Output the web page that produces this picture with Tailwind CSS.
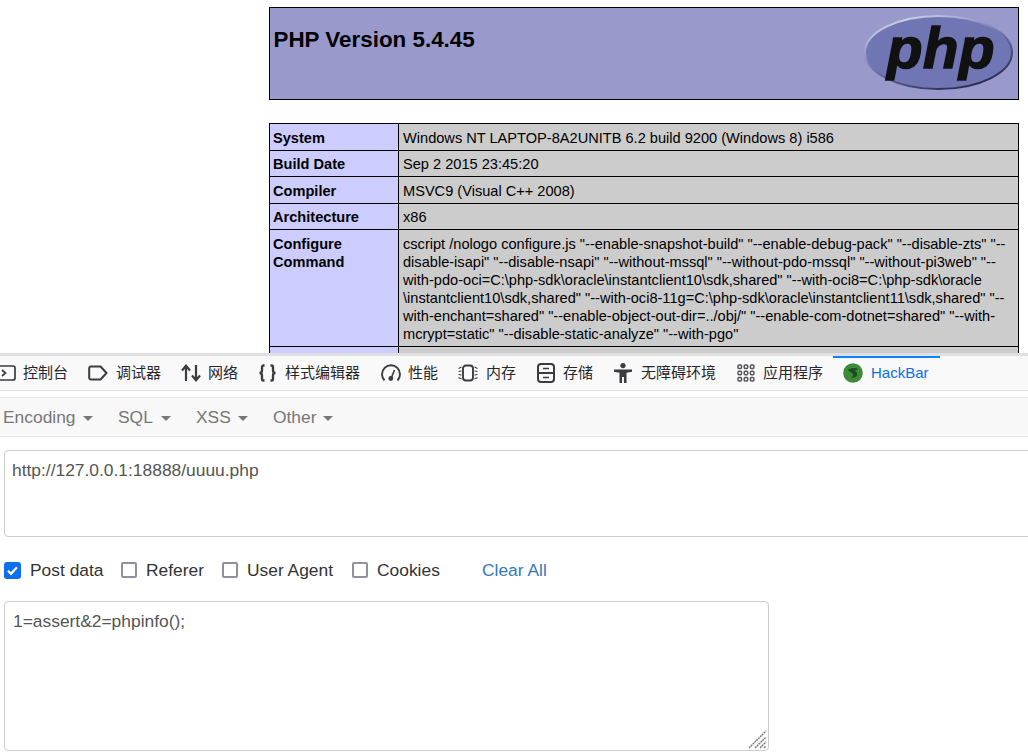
<!DOCTYPE html>
<html lang="zh">
<head>
<meta charset="UTF-8">
<title>phpinfo - HackBar</title>
<script src="https://cdn.jsdelivr.net/npm/@tailwindcss/browser@4"></script>
</head>
<body class="bg-white w-[1028px] h-[752px] overflow-hidden font-['Liberation_Sans','Noto_Sans_CJK_SC',sans-serif]">
  <!-- phpinfo page -->
  <div class="h-[353px] overflow-hidden pt-[7px] pl-[269px] pr-[9px] text-black">
    <div class="h-[93px] border border-black bg-[#9999cc] flex justify-between pl-[3.500px] pr-[5px]">
      <h1 class="text-[22.4px] leading-[27px] font-bold pt-[18px]">PHP Version 5.4.45</h1>
      <svg class="mt-[7px]" width="150" height="78" viewBox="0 0 150 78">
        <defs>
          <linearGradient id="rim" x1="0.2" y1="0" x2="0.8" y2="1">
            <stop offset="0" stop-color="#d5d7ec"/>
            <stop offset="0.5" stop-color="#6c71ad"/>
            <stop offset="1" stop-color="#1f2340"/>
          </linearGradient>
        </defs>
        <ellipse cx="75.500" cy="37.500" rx="73.500" ry="36.500" fill="#6f76b3" stroke="url(#rim)" stroke-width="2"/>
        <text x="78" y="53" text-anchor="middle" font-family="Liberation Sans" font-size="58" font-weight="700" font-style="italic" letter-spacing="0.500" fill="#111" stroke="#111" stroke-width="1.600">php</text>
      </svg>
    </div>
    <table class="mt-[23px] w-[750px] border-collapse table-fixed text-[14.6px] leading-[18px]">
      <tbody>
        <tr class="h-[27px]">
          <td class="w-[129px] border border-black bg-[#ccccff] font-bold pl-[3px] pr-1 pt-px align-middle">System</td>
          <td class="border border-black bg-[#cccccc] px-1 pt-px align-middle">Windows NT LAPTOP-8A2UNITB 6.2 build 9200 (Windows 8) i586</td>
        </tr>
        <tr class="h-[26px]">
          <td class="border border-black bg-[#ccccff] font-bold pl-[3px] pr-1 align-middle">Build Date</td>
          <td class="border border-black bg-[#cccccc] px-1 align-middle">Sep 2 2015 23:45:20</td>
        </tr>
        <tr class="h-[27px]">
          <td class="border border-black bg-[#ccccff] font-bold pl-[3px] pr-1 pt-px align-middle">Compiler</td>
          <td class="border border-black bg-[#cccccc] px-1 pt-px align-middle">MSVC9 (Visual C++ 2008)</td>
        </tr>
        <tr class="h-[26px]">
          <td class="border border-black bg-[#ccccff] font-bold pl-[3px] pr-1 align-middle">Architecture</td>
          <td class="border border-black bg-[#cccccc] px-1 align-middle">x86</td>
        </tr>
        <tr class="h-[117px]">
          <td class="border border-black bg-[#ccccff] font-bold pl-[3px] pr-1 align-top pt-[5px]">Configure<br>Command</td>
          <td class="border border-black bg-[#cccccc] px-1 align-top pt-[5px] whitespace-nowrap">cscript /nologo configure.js "--enable-snapshot-build" "--enable-debug-pack" "--disable-zts" "--<br>disable-isapi" "--disable-nsapi" "--without-mssql" "--without-pdo-mssql" "--without-pi3web" "--<br>with-pdo-oci=C:\php-sdk\oracle\instantclient10\sdk,shared" "--with-oci8=C:\php-sdk\oracle<br>\instantclient10\sdk,shared" "--with-oci8-11g=C:\php-sdk\oracle\instantclient11\sdk,shared" "--<br>with-enchant=shared" "--enable-object-out-dir=../obj/" "--enable-com-dotnet=shared" "--with-<br>mcrypt=static" "--disable-static-analyze" "--with-pgo"</td>
        </tr>
        <tr class="h-[20px]">
          <td class="border border-black bg-[#ccccff]"></td>
          <td class="border border-black bg-[#cccccc]"></td>
        </tr>
      </tbody>
    </table>
  </div>

  <!-- devtools tabs -->
  <div class="h-[38px] border-t-[3px] border-[#e0e0e2] border-b-[1px] border-b-[#e0e0e2] bg-[#f9f9fa] flex items-center text-[15px] text-[#26262b]">
    <div class="flex items-center gap-[7px] w-[88px] shrink-0">
      <svg width="16" height="16" viewBox="0 0 16 16" fill="none" stroke="#3b3b40" stroke-width="1.700"><path d="M0 1h13a2 2 0 0 1 2 2v10a2 2 0 0 1-2 2H0"/><path d="M2 5l3.500 3L2 11"/></svg>
      <span>控制台</span>
    </div>
    <div class="flex items-center gap-[8px] w-[93px] shrink-0">
      <svg width="20" height="16" viewBox="0 0 20 16" fill="none" stroke="#3b3b40" stroke-width="2"><path d="M3 1.500h9.500L18.500 8l-6 6.500H3A1.800 1.800 0 0 1 1.200 12.700V3.300A1.800 1.800 0 0 1 3 1.500z" stroke-linejoin="round"/></svg>
      <span>调试器</span>
    </div>
    <div class="flex items-center gap-[7px] w-[77px] shrink-0">
      <svg width="20" height="18" viewBox="0 0 20 18" fill="none" stroke="#3b3b40" stroke-width="2.200"><path d="M5 17V2M1 6.500L5 1.800l4 4.700"/><path d="M15 1v15M11 11.500l4 4.700 4-4.700"/></svg>
      <span>网络</span>
    </div>
    <div class="flex items-center gap-[8px] w-[123px] shrink-0">
      <svg width="19" height="18" viewBox="0 0 19 18" fill="none" stroke="#3b3b40" stroke-width="2.300"><path d="M6.500 1.500H5.500A1.500 1.500 0 0 0 4 3v3.500C4 8 3 9 1.500 9 3 9 4 10 4 11.500V15a1.500 1.500 0 0 0 1.500 1.500h1"/><path d="M12.500 1.500h1A1.500 1.500 0 0 1 15 3v3.500C15 8 16 9 17.500 9 16 9 15 10 15 11.500V15a1.500 1.500 0 0 1-1.500 1.500h-1"/></svg>
      <span>样式编辑器</span>
    </div>
    <div class="flex items-center gap-[7px] w-[77px] shrink-0">
      <svg width="20" height="18" viewBox="0 0 20 18" fill="none" stroke="#3b3b40" stroke-width="1.900"><path d="M3.500 16.500A9 9 0 1 1 16.500 16.500"/><path d="M13.500 6l-3 7.500" stroke-width="1.600"/><circle cx="9.800" cy="14.500" r="2.400" fill="#3b3b40" stroke="none"/></svg>
      <span>性能</span>
    </div>
    <div class="flex items-center gap-[8px] w-[79px] shrink-0">
      <svg width="20" height="18" viewBox="0 0 20 18" fill="none" stroke="#3b3b40" stroke-width="1.900"><rect x="5" y="1.500" width="10" height="15" rx="3"/><path d="M0.500 4.500l3-1.500M0.500 7.500l3-.5M0.500 10.500l3 .5M0.500 13.500l3 1.500M19.500 4.500l-3-1.500M19.500 7.500l-3-.5M19.500 10.500l-3 .5M19.500 13.500l-3 1.500" stroke-width="1.100"/></svg>
      <span>内存</span>
    </div>
    <div class="flex items-center gap-[8px] w-[77px] shrink-0">
      <svg width="18" height="20" viewBox="0 0 18 20" fill="none" stroke="#3b3b40" stroke-width="2"><rect x="1" y="1" width="16" height="18" rx="3"/><path d="M1 10h16"/><path d="M6 5.500h6M6 14.500h6" stroke-width="1.500"/></svg>
      <span>存储</span>
    </div>
    <div class="flex items-center gap-[9px] w-[123px] shrink-0">
      <svg width="18" height="20" viewBox="0 0 18 20" fill="#3b3b40"><circle cx="9" cy="2.600" r="2.600"/><path d="M0 6.500h18v2.300l-5.500 1V20h-2.500v-6H8v6H5.500V9.800L0 8.800z"/></svg>
      <span>无障碍环境</span>
    </div>
    <div class="flex items-center gap-[8px] w-[96px] shrink-0">
      <svg width="18" height="18" viewBox="0 0 18 18" fill="none" stroke="#55555a" stroke-width="1.500"><rect x="1" y="1" width="3.500" height="3.500" rx="1"/><rect x="7.200" y="1" width="3.500" height="3.500" rx="1"/><rect x="13.400" y="1" width="3.500" height="3.500" rx="1"/><rect x="1" y="7.200" width="3.500" height="3.500" rx="1"/><rect x="7.200" y="7.200" width="3.500" height="3.500" rx="1"/><rect x="13.400" y="7.200" width="3.500" height="3.500" rx="1"/><rect x="1" y="13.400" width="3.500" height="3.500" rx="1"/><rect x="7.200" y="13.400" width="3.500" height="3.500" rx="1"/><rect x="13.400" y="13.400" width="3.500" height="3.500" rx="1"/></svg>
      <span>应用程序</span>
    </div>
    <div class="flex items-center gap-[8px] h-[35px] w-[107px] shrink-0 pl-[10px] pb-[2px] border-t-2 border-[#0a84ff] text-[#0b6fe0]">
      <svg width="20" height="20" viewBox="0 0 20 20"><circle cx="10" cy="10" r="9.800" fill="#3f8a38"/><path d="M5 7c3-2.500 8-2.500 10-.5-1 .5-2.500 .5-3.500 1 1.500 1 3 2.500 2.500 5-1.500 2-4 2.500-6 2 1.500-1 2.500-2 2-3.500-1.500-1.500-3.500-2-5-4z" fill="#1c4d20"/></svg>
      <span>HackBar</span>
    </div>
  </div>

  <!-- hackbar menu -->
  <div class="mt-[6px] h-[40px] bg-[#f8f8f8] border-y border-[#e7e7e7] flex items-center text-[17.4px] text-[#777777] pl-[3px]">
    <span class="w-[73px]">Encoding</span><span class="ml-[7px] mr-[25px] mt-[2px] border-x-[5px] border-x-transparent border-t-[5px] border-t-[#777777]"></span>
    <span class="w-[35px]">SQL</span><span class="ml-[8px] mr-[25px] mt-[2px] border-x-[5px] border-x-transparent border-t-[5px] border-t-[#777777]"></span>
    <span class="w-[34px]">XSS</span><span class="ml-[8px] mr-[25px] mt-[2px] border-x-[5px] border-x-transparent border-t-[5px] border-t-[#777777]"></span>
    <span class="w-[44px]">Other</span><span class="ml-[6px] mt-[2px] border-x-[5px] border-x-transparent border-t-[5px] border-t-[#777777]"></span>
  </div>

  <!-- hackbar form -->
  <div class="pl-1 text-[17.4px] text-[#555555]">
    <div class="mt-[13px] h-[87px] w-[1040px] rounded-[4px] border border-[#cccccc] bg-white pl-[7px] pr-2 pt-[7px] leading-[25px]">http://127.0.0.1:18888/uuuu.php</div>
    <div class="mt-[21px] h-[24px] flex items-center text-[#333333]">
      <span class="w-[17px] h-[17px] rounded-[3px] bg-[#0b6ff0] flex items-center justify-center">
        <svg width="13" height="13" viewBox="0 0 13 13" fill="none" stroke="#fff" stroke-width="2.200"><path d="M2 6.800l3 3 6-6.500"/></svg>
      </span>
      <span class="ml-[9px] w-[91px]">Post data</span>
      <span class="w-[16px] h-[16px] rounded-[2px] border-2 border-[#8f8f9d] bg-white"></span>
      <span class="ml-[9px] w-[76px]">Referer</span>
      <span class="w-[16px] h-[16px] rounded-[2px] border-2 border-[#8f8f9d] bg-white"></span>
      <span class="ml-[9px] w-[105px]">User Agent</span>
      <span class="w-[16px] h-[16px] rounded-[2px] border-2 border-[#8f8f9d] bg-white"></span>
      <span class="ml-[9px] w-[105px]">Cookies</span>
      <span class="text-[#337ab7]">Clear All</span>
    </div>
    <div class="relative mt-[19px] h-[150px] w-[765px] rounded-[4px] border border-[#cccccc] bg-white px-2 pt-[7px] leading-[25px]">1=assert&amp;2=phpinfo();
      <svg class="absolute right-0 bottom-0" width="20" height="20" viewBox="0 0 20 20" fill="none" stroke="#777" stroke-width="1.400" stroke-dasharray="2 0.600"><path d="M1 18L18 1M7 18L18 7M12 18l6-6M16 18l2-2"/></svg>
    </div>
  </div>
</body>
</html>
